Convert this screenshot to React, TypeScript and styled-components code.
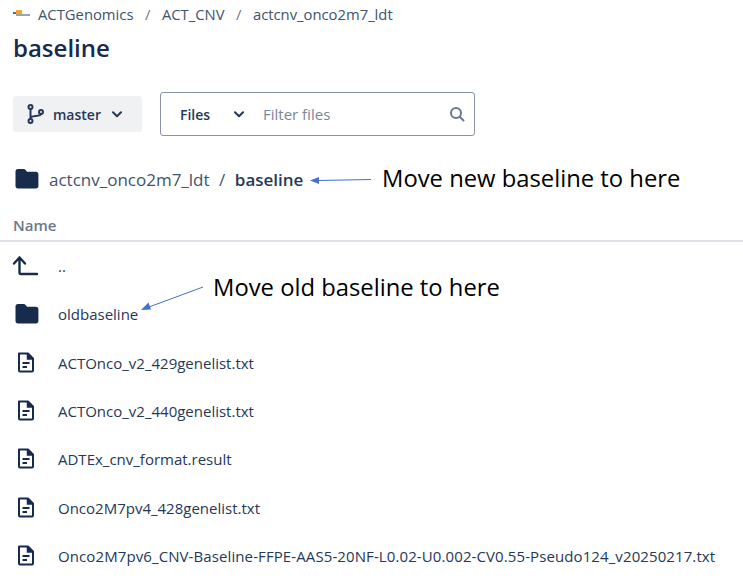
import styled, { createGlobalStyle } from "styled-components";

const GlobalStyle = createGlobalStyle`
  html, body {
    margin: 0;
    padding: 0;
    background: #fff;
    font-family: "Open Sans", "Noto Sans", sans-serif;
  }
`;

const Page = styled.div`
  position: relative;
  width: 743px;
  height: 579px;
  overflow: hidden;
  color: #172b4d;
  padding-top: 4px;
  box-sizing: border-box;
`;

const Crumbs = styled.nav`
  display: flex;
  align-items: center;
  height: 20px;
  padding-left: 13px;
  font-size: 14.8px;
  color: #42526e;
`;

const Logo = styled.svg`
  width: 17px;
  height: 8px;
  margin-right: 8px;
`;

const Sep = styled.span`
  margin: 0 11.5px;
  color: #6b778c;
`;

const Title = styled.h1`
  margin: 9px 0 0 13px;
  font-size: 24px;
  line-height: 30px;
  font-weight: 600;
  color: #172b4d;
`;

const Toolbar = styled.div`
  display: flex;
  align-items: center;
  gap: 18px;
  margin: 29px 0 0 13px;
`;

const BranchButton = styled.div`
  display: flex;
  align-items: center;
  width: 129px;
  height: 36px;
  padding-left: 14px;
  box-sizing: border-box;
  background: #f0f1f3;
  border-radius: 3px;
  font-size: 14px;
  font-weight: 600;
  color: #253858;
`;

const BranchName = styled.span`
  margin: 0 11px 0 8px;
`;

const SearchBox = styled.div`
  display: flex;
  align-items: center;
  width: 315px;
  height: 44px;
  padding: 0 9px 0 19px;
  box-sizing: border-box;
  border: 1px solid #8993a4;
  border-radius: 3px;
  font-size: 14px;
`;

const SearchScope = styled.span`
  font-weight: 600;
  color: #253858;
  width: 54px;
`;

const Placeholder = styled.span`
  flex: 1;
  margin-left: 19px;
  font-size: 15px;
  color: #7a869a;
`;

const PathRow = styled.div`
  display: flex;
  align-items: center;
  height: 24px;
  margin: 31px 0 0 15px;
  font-size: 17px;
  color: #42526e;
`;

const PathParent = styled.span`
  margin-left: 10px;
`;

const PathCurrent = styled.span`
  font-weight: 600;
  color: #253858;
`;

const PathSep = styled.span`
  margin: 0 9.5px;
`;

const Header = styled.div`
  margin-top: 24px;
  height: 25px;
  padding-left: 13px;
  border-bottom: 2px solid #dfe1e6;
  font-size: 15px;
  font-weight: 600;
  line-height: 20px;
  color: #6b778c;
`;

const Rows = styled.ul`
  list-style: none;
  margin: 0;
  padding: 0;
`;

const Row = styled.li`
  display: flex;
  align-items: center;
  height: 48.3px;
  padding-left: 15px;
  font-size: 15px;
  color: #253858;
`;

const FileName = styled.span<{ $long?: boolean }>`
  letter-spacing: ${(p) => (p.$long ? "0.1px" : "0")};
  white-space: nowrap;
`;

const IconSlot = styled.span`
  display: flex;
  align-items: center;
  justify-content: center;
  width: 24px;
  height: 24px;
  margin-right: 19px;
`;

const Note = styled.div<{ $x: number; $y: number }>`
  position: absolute;
  left: ${(p) => p.$x}px;
  top: ${(p) => p.$y}px;
  font-size: 23.8px;
  line-height: 30px;
  color: #000;
  white-space: nowrap;
`;

const Arrow = styled.svg`
  position: absolute;
  left: 0;
  top: 0;
  pointer-events: none;
`;

function FolderIcon() {
  return (
    <svg width="24" height="24" viewBox="0 0 24 24">
      <path
        d="M.5 4.500C.5 3.100 1.500 2 2.900 2h5.700c.8 0 1.500.4 2 1l1.400 1.800h9c1.300 0 2.400 1 2.400 2.400v11.800c0 1.400-1 2.400-2.400 2.400H2.900c-1.400 0-2.400-1-2.400-2.400z"
        fill="#172b4d"
      />
    </svg>
  );
}

function FileIcon() {
  return (
    <svg width="24" height="24" viewBox="0 0 24 24" fill="none" stroke="#172b4d" strokeWidth="2">
      <path d="M4 2.500h9l5 5v12a1 1 0 0 1-1 1H5a1 1 0 0 1-1-1z" strokeLinejoin="round" />
      <path d="M12.500 2.500v5.500H18" fill="#172b4d" strokeWidth="1.500" />
      <path d="M7.500 12h7M7.500 16h4.500" />
    </svg>
  );
}

function UpIcon() {
  return (
    <svg width="28" height="24" viewBox="0 0 28 24" fill="none" stroke="#172b4d" strokeWidth="2.400" strokeLinecap="round" strokeLinejoin="round" style={{ marginLeft: -4 }}>
      <path d="M3 9.500 8.500 3.500l5.500 6M8.500 3.500V18.500a1.500 1.500 0 0 0 1.500 1.500H26" />
    </svg>
  );
}

function Chevron() {
  return (
    <svg width="10" height="7" viewBox="0 0 10 7" fill="none" stroke="#253858" strokeWidth="2" strokeLinecap="round" strokeLinejoin="round">
      <path d="M1 1.300 5 5.300l4-4" />
    </svg>
  );
}

const files = [
  "ACTOnco_v2_429genelist.txt",
  "ACTOnco_v2_440genelist.txt",
  "ADTEx_cnv_format.result",
  "Onco2M7pv4_428genelist.txt",
  "Onco2M7pv6_CNV-Baseline-FFPE-AAS5-20NF-L0.02-U0.002-CV0.55-Pseudo124_v20250217.txt",
];

export default function App() {
  return (
    <Page>
      <GlobalStyle />
      <Crumbs>
        <Logo viewBox="0 0 17 8">
          <rect x="0" y="2" width="3" height="2" fill="#3b6fb6" />
          <rect x="3" y="0" width="6" height="4" fill="#f5a623" />
          <rect x="3" y="4" width="14" height="2" fill="#9aa3b2" />
        </Logo>
        ACTGenomics<Sep>/</Sep>ACT_CNV<Sep>/</Sep>actcnv_onco2m7_ldt
      </Crumbs>
      <Title>baseline</Title>
      <Toolbar>
        <BranchButton>
          <svg width="18" height="20" viewBox="0 0 18 20" fill="none" stroke="#253858" strokeWidth="2">
            <circle cx="3.500" cy="3" r="2" />
            <circle cx="3.500" cy="17" r="2" />
            <circle cx="14" cy="8" r="2" />
            <path d="M3.500 5v10M3.500 14c0-3 10.500-1 10.500-4" />
          </svg>
          <BranchName>master</BranchName>
          <Chevron />
        </BranchButton>
        <SearchBox>
          <SearchScope>Files</SearchScope>
          <Chevron />
          <Placeholder>Filter files</Placeholder>
          <svg width="16" height="16" viewBox="0 0 16 16" fill="none" stroke="#6b778c" strokeWidth="2" strokeLinecap="round">
            <circle cx="7" cy="7" r="5" />
            <path d="M11 11l3.500 3.500" />
          </svg>
        </SearchBox>
      </Toolbar>
      <PathRow>
        <FolderIcon />
        <PathParent>actcnv_onco2m7_ldt</PathParent>
        <PathSep>/</PathSep>
        <PathCurrent>baseline</PathCurrent>
      </PathRow>
      <Header>Name</Header>
      <Rows>
        <Row>
          <IconSlot>
            <UpIcon />
          </IconSlot>
          ..
        </Row>
        <Row>
          <IconSlot>
            <FolderIcon />
          </IconSlot>
          oldbaseline
        </Row>
        {files.map((name) => (
          <Row key={name}>
            <IconSlot>
              <FileIcon />
            </IconSlot>
            <FileName $long={name.length > 60}>{name}</FileName>
          </Row>
        ))}
      </Rows>
      <Note $x={382} $y={163}>Move new baseline to here</Note>
      <Note $x={213} $y={272}>Move old baseline to here</Note>
      <Arrow width="743" height="579" viewBox="0 0 743 579">
        <path d="M371 179.500 318 180.500" stroke="#4472c4" strokeWidth="1" />
        <path d="M310 180.500 319 177v7z" fill="#4472c4" />
        <path d="M203 287 149 307" stroke="#4472c4" strokeWidth="1" />
        <path d="M141 310 148.500 302.500 151 309.500z" fill="#4472c4" />
      </Arrow>
    </Page>
  );
}
